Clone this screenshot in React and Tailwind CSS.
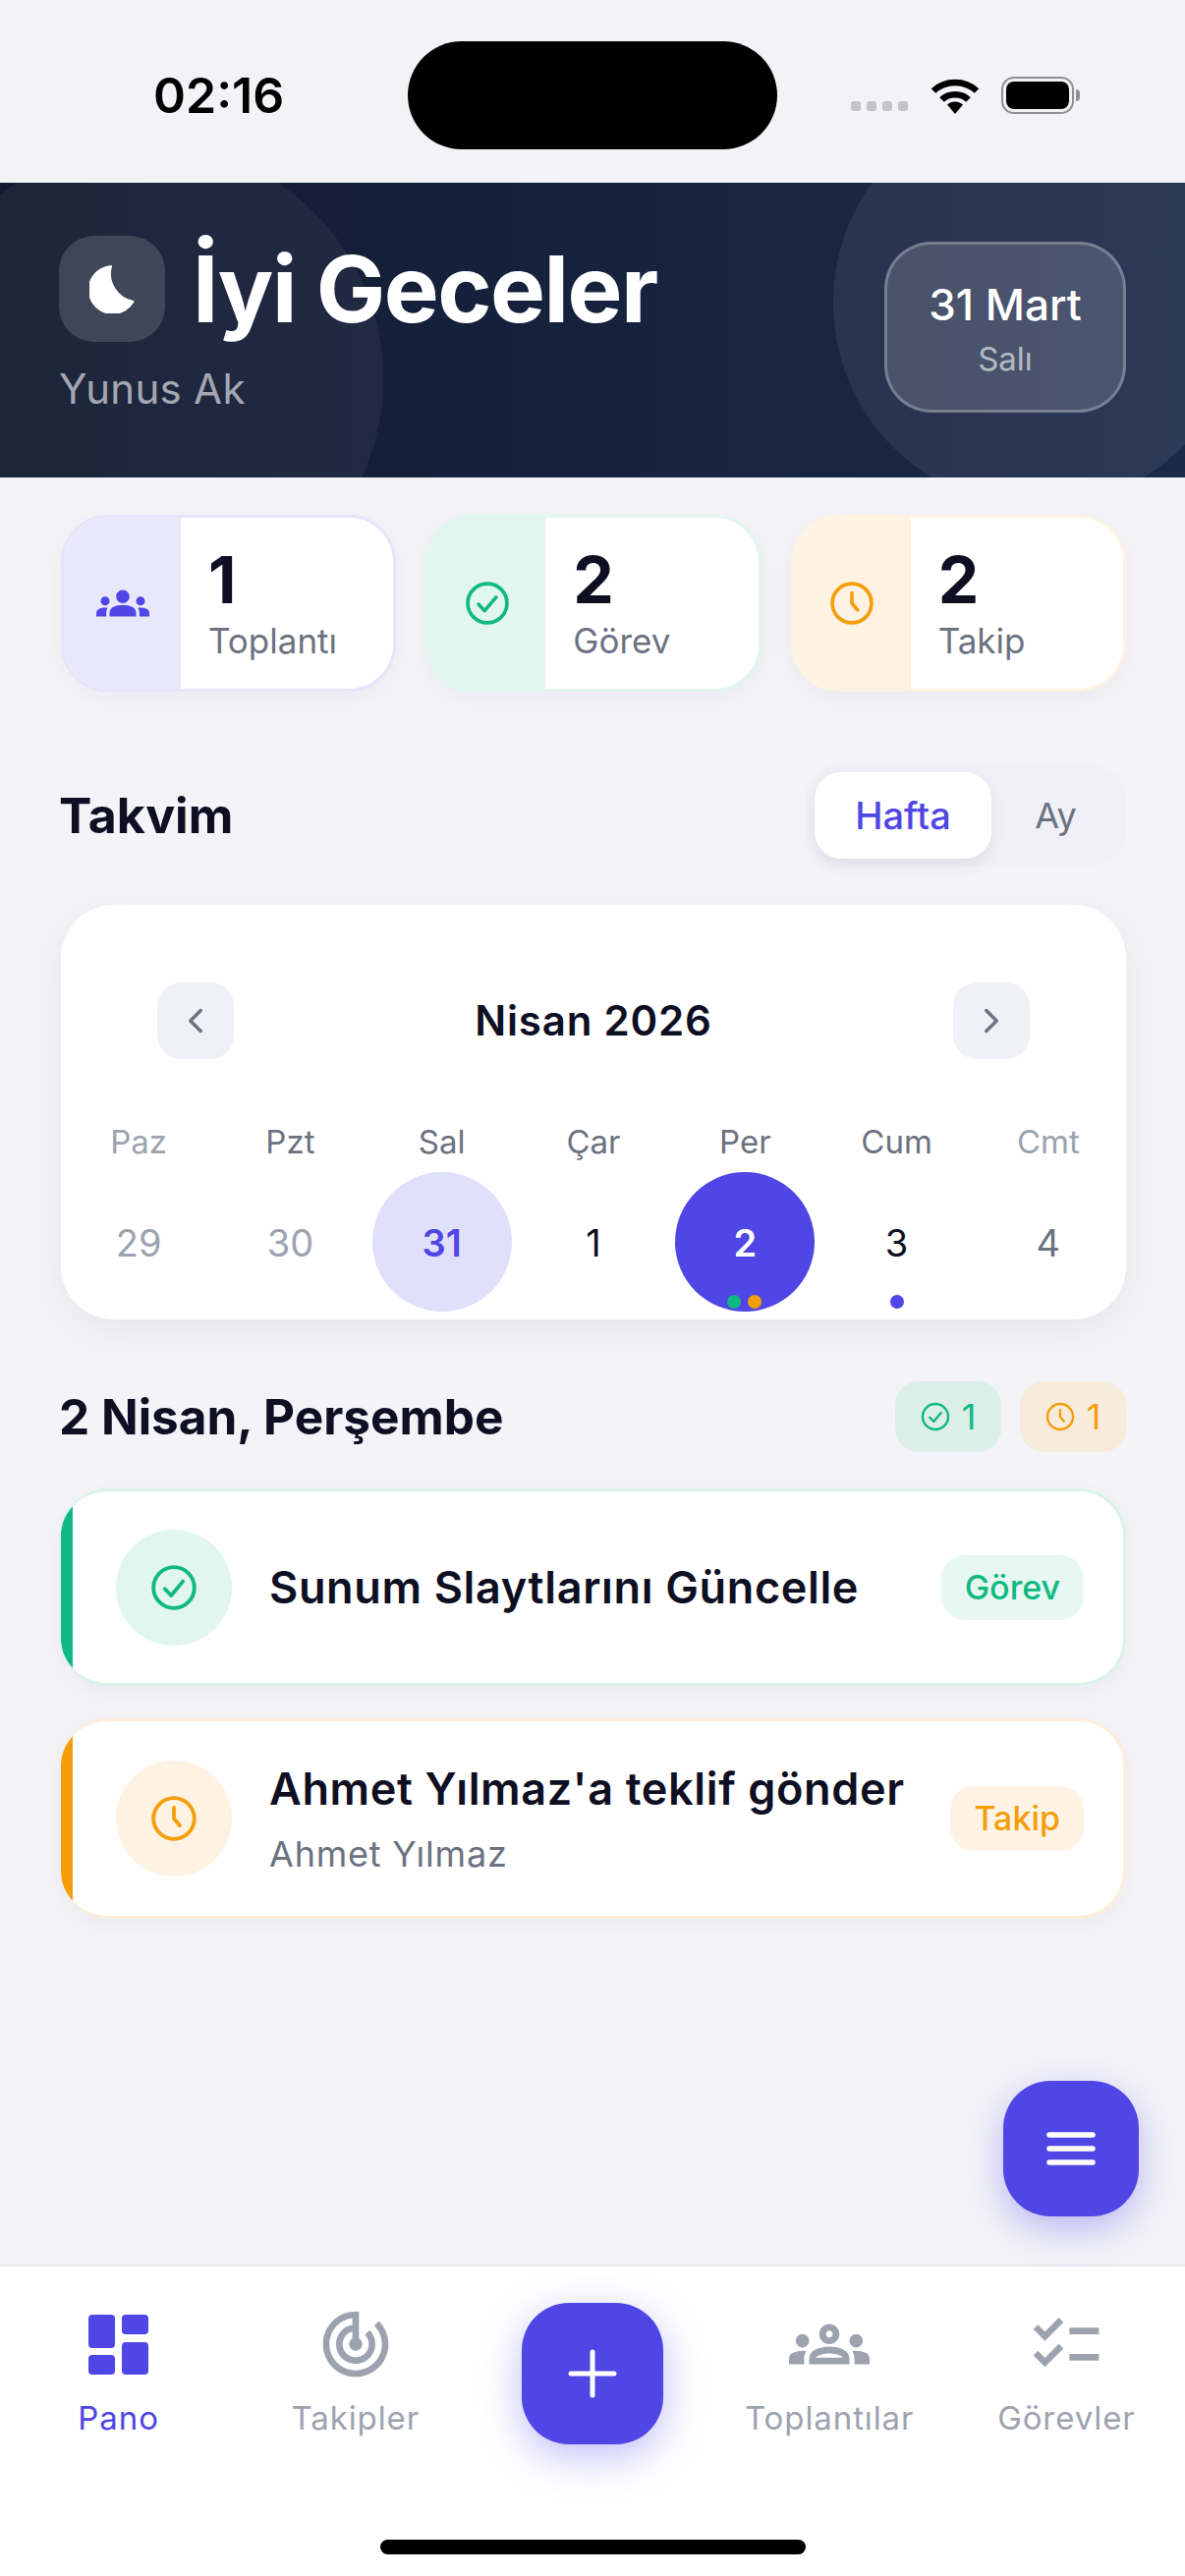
import { MdGroups, MdOutlineGroups, MdTrackChanges, MdChecklist } from "react-icons/md";
import { ChevronLeft, ChevronRight } from "lucide-react";

const weekdays = [
  { label: "Paz", muted: true },
  { label: "Pzt" },
  { label: "Sal" },
  { label: "Çar" },
  { label: "Per" },
  { label: "Cum" },
  { label: "Cmt", muted: true },
];

const CheckCircle = ({ size, className }) => (
  <svg width={size} height={size} viewBox="0 0 24 24" fill="none" stroke="currentColor" strokeWidth="1.9" strokeLinecap="round" strokeLinejoin="round" className={className}>
    <circle cx="12" cy="12" r="10.4" />
    <path d="M7.4 12.6l3.2 3.4 6-7.2" />
  </svg>
);

const ClockCircle = ({ size, className }) => (
  <svg width={size} height={size} viewBox="0 0 24 24" fill="none" stroke="currentColor" strokeWidth="1.9" strokeLinecap="round" strokeLinejoin="round" className={className}>
    <circle cx="12" cy="12" r="10.4" />
    <path d="M12 6.5V12l3 3.6" />
  </svg>
);

const MoonIcon = () => (
  <svg width="46" height="50" viewBox="0 0 46 50" fill="#ffffff" stroke="#ffffff" strokeWidth="2" strokeLinejoin="round">
    <path d="M22 2A24 24 0 1 0 44.5 38A29 29 0 0 1 22 2Z" />
  </svg>
);

const WifiIcon = () => (
  <svg width="50" height="39" viewBox="0 0 50 39" fill="none" stroke="#000000" strokeWidth="6.5" strokeLinecap="butt">
    <path d="M3 14.5C15 3 35 3 47 14.5" />
    <path d="M11.5 23.5C18.5 16.5 31.5 16.5 38.5 23.5" />
    <path d="M17 28.5C21.5 24.5 28.5 24.5 33 28.5L25 38Z" fill="#000000" stroke="none" />
  </svg>
);

const DashboardIcon = () => (
  <svg width="61" height="61" viewBox="0 0 61 61" fill="#4f46e5">
    <rect x="0" y="0" width="27" height="34" rx="4" />
    <rect x="0" y="41" width="27" height="20" rx="4" />
    <rect x="34" y="0" width="27" height="20" rx="4" />
    <rect x="34" y="28" width="27" height="33" rx="4" />
  </svg>
);

const StatCard = ({ icon, value, label, panel, border }) => (
  <div className={`flex h-[180px] overflow-hidden rounded-[48px] border-[3px] bg-white shadow-[0_6px_24px_rgba(17,17,39,0.04)] ${border}`}>
    <div className={`flex w-[119px] shrink-0 items-center justify-center ${panel}`}>{icon}</div>
    <div className="flex flex-col justify-center pb-[2px] pl-[28px]">
      <span className="text-[66px] leading-[78px] font-bold text-[#0f0f23]">{value}</span>
      <span className="text-[35px] leading-[46px] text-[#6b7280]">{label}</span>
    </div>
  </div>
);

const TaskCard = ({ icon, title, subtitle, tag, tagClass, circle, border, bar, height }) => (
  <div className={`flex items-center overflow-hidden rounded-[48px] border-[3px] border-l-0 bg-white pr-[40px] shadow-[0_6px_24px_rgba(17,17,39,0.04)] ${border} ${height}`}>
    <div className={`w-[12px] shrink-0 self-stretch ${bar}`} />
    <div className={`ml-[44px] flex h-[118px] w-[118px] shrink-0 items-center justify-center rounded-full ${circle}`}>{icon}</div>
    <div className="ml-[38px] min-w-0 flex-1">
      <div className="text-[45px] leading-[60px] font-semibold tracking-[0.65px] text-[#0f0f23]">{title}</div>
      {subtitle && <div className="mt-[12px] text-[36px] leading-[48px] tracking-[0.8px] text-[#6b7280]">{subtitle}</div>}
    </div>
    <span className={`rounded-[24px] px-[24px] py-[9px] text-[34px] leading-[48px] font-medium ${tagClass}`}>{tag}</span>
  </div>
);

const NavItem = ({ icon, label, active }) => (
  <div className="flex flex-col items-center">
    <div className="flex h-[80px] items-center justify-center">{icon}</div>
    <span className={`mt-[13px] text-[33px] leading-[44px] tracking-[0.9px] ${active ? "text-[#4f46e5]" : "text-[#9ca3af]"}`}>{label}</span>
  </div>
);

export default function App() {
  return (
    <div className="flex h-[2622px] w-[1206px] flex-col overflow-hidden bg-[#f3f3f8] [font-family:Inter,sans-serif]">
      {/* status bar */}
      <div className="flex h-[186px] shrink-0 items-start bg-[#f2f2f7] pt-[42px] pl-[156px]">
        <div className="flex h-[110px] w-[259px] items-center">
          <span className="text-[50px] leading-none font-semibold text-black">02:16</span>
        </div>
        <div className="h-[110px] w-[376px] rounded-[55px] bg-black" />
        <div className="ml-[75px] flex h-[110px] items-center">
          <div className="mt-[22px] flex gap-[6px]">
            <span className="h-[10px] w-[10px] rounded-[3px] bg-[#c4c4c8]" />
            <span className="h-[10px] w-[10px] rounded-[3px] bg-[#c4c4c8]" />
            <span className="h-[10px] w-[10px] rounded-[3px] bg-[#c4c4c8]" />
            <span className="h-[10px] w-[10px] rounded-[3px] bg-[#c4c4c8]" />
          </div>
          <div className="ml-[23px]">
            <WifiIcon />
          </div>
          <div className="ml-[22px] flex items-center">
            <div className="h-[38px] w-[74px] rounded-[13px] border-[2px] border-[#8e8e93] p-[3px]">
              <div className="h-full w-full rounded-[8px] bg-black" />
            </div>
            <div className="ml-[2px] h-[12px] w-[4px] rounded-r-[4px] bg-[#8e8e93]" />
          </div>
        </div>
      </div>

      {/* greeting header */}
      <div className="relative flex h-[300px] shrink-0 items-center justify-between overflow-hidden bg-gradient-to-r from-[#111a30] to-[#1c2a4a] pr-[60px] pl-[60px]">
        <div className="absolute top-[-40px] left-[-90px] h-[480px] w-[480px] rounded-full bg-white/5" />
        <div className="absolute top-[-86px] left-[848px] h-[416px] w-[416px] rounded-full bg-white/7" />
        <div className="relative mt-[-12px]">
          <div className="flex items-center gap-[28px]">
            <div className="flex h-[108px] w-[108px] items-center justify-center rounded-[36px] bg-white/15">
              <MoonIcon />
            </div>
            <h1 className="text-[94px] leading-[108px] font-bold tracking-[-1.5px] text-white">İyi Geceler</h1>
          </div>
          <div className="mt-[24px] text-[42px] leading-[48px] tracking-[0.3px] text-white/60">Yunus Ak</div>
        </div>
        <div className="relative mt-[-7px] flex h-[174px] w-[246px] flex-col items-center justify-center rounded-[48px] border-[3px] border-white/25 bg-white/15 pt-[3px]">
          <span className="text-[44px] leading-[54px] font-medium text-white">31 Mart</span>
          <span className="mt-[7px] text-[33px] leading-[42px] text-white/60">Salı</span>
        </div>
      </div>

      {/* page content */}
      <div className="relative flex-1 pr-[60px] pl-[62px]">
        <div className="mt-[38px] grid grid-cols-3 gap-[30px]">
          <StatCard
            icon={<MdGroups size={54} className="text-[#4f46e5]" />}
            value="1"
            label="Toplantı"
            panel="bg-[#e9e8fb]"
            border="border-[#e6e4fa]"
          />
          <StatCard
            icon={<CheckCircle size={46} className="text-[#10b981]" />}
            value="2"
            label="Görev"
            panel="bg-[#e1f6ee]"
            border="border-[#e1f6ee]"
          />
          <StatCard
            icon={<ClockCircle size={46} className="text-[#f59e0b]" />}
            value="2"
            label="Takip"
            panel="bg-[#fef2e2]"
            border="border-[#fef2e2]"
          />
        </div>

        <div className="mt-[74px] flex items-center justify-between">
          <h2 className="-ml-[2px] text-[50px] leading-[60px] font-bold text-[#0f0f23]">Takvim</h2>
          <div className="flex h-[104px] w-[326px] items-center rounded-[36px] bg-[#f0f0f6] py-[9px] pl-[9px]">
            <span className="flex h-[88px] w-[180px] items-center justify-center rounded-[27px] bg-white text-[38px] font-medium text-[#4f46e5] shadow-[0_6px_18px_rgba(17,17,39,0.08)]">Hafta</span>
            <span className="flex-1 pr-[6px] text-center text-[36px] text-[#6b7280]">Ay</span>
          </div>
        </div>

        <div className="mt-[39px] rounded-[54px] bg-white pt-[79px] pb-[8px] shadow-[0_12px_42px_rgba(17,17,39,0.06)]">
          <div className="flex items-center justify-between px-[98px]">
            <div className="flex h-[78px] w-[78px] items-center justify-center rounded-[24px] bg-[#f0f1f6]">
              <ChevronLeft size={42} strokeWidth={2} className="text-[#6b7280]" />
            </div>
            <span className="text-[42px] leading-[54px] font-semibold tracking-[0.8px] text-[#0f0f23]">Nisan 2026</span>
            <div className="flex h-[78px] w-[78px] items-center justify-center rounded-[24px] bg-[#f0f1f6]">
              <ChevronRight size={42} strokeWidth={2} className="text-[#6b7280]" />
            </div>
          </div>

          <div className="mt-[62px] grid grid-cols-7 px-[2px]">
            {weekdays.map((d) => (
              <span key={d.label} className={`text-center text-[33px] leading-[44px] ${d.muted ? "text-[#9ca3af]" : "text-[#6b7280]"}`}>
                {d.label}
              </span>
            ))}
          </div>

          <div className="mt-[9px] grid grid-cols-7 justify-items-center px-[2px] text-[38px]">
            <span className="flex h-[142px] w-[142px] items-center justify-center pt-[3px] text-[#9ca3af]">29</span>
            <span className="flex h-[142px] w-[142px] items-center justify-center pt-[3px] text-[#9ca3af]">30</span>
            <span className="flex h-[142px] w-[142px] items-center justify-center rounded-full bg-[#e0e0fa] pt-[3px] font-semibold text-[#4f46e5]">31</span>
            <span className="flex h-[142px] w-[142px] items-center justify-center pt-[3px] text-[#0f0f23]">1</span>
            <span className="relative flex h-[142px] w-[142px] items-center justify-center rounded-full bg-[#4f46e5] pt-[3px] font-semibold text-white">
              2
              <span className="absolute bottom-[3px] left-[53px] flex gap-[7px]">
                <span className="h-[14px] w-[14px] rounded-full bg-[#10b981]" />
                <span className="h-[14px] w-[14px] rounded-full bg-[#f59e0b]" />
              </span>
            </span>
            <span className="relative flex h-[142px] w-[142px] items-center justify-center pt-[3px] text-[#0f0f23]">
              3
              <span className="absolute bottom-[3px] left-[64px] h-[14px] w-[14px] rounded-full bg-[#4f46e5]" />
            </span>
            <span className="flex h-[142px] w-[142px] items-center justify-center pt-[3px] text-[#6b7280]">4</span>
          </div>
        </div>

        <div className="mt-[63px] flex items-center justify-between">
          <h2 className="-ml-[2px] text-[49.5px] leading-[60px] font-bold text-[#0f0f23]">2 Nisan, Perşembe</h2>
          <div className="flex gap-[19px]">
            <span className="flex h-[72px] w-[108px] items-center justify-center gap-[12px] rounded-[24px] bg-[#dcefe9] text-[36px] text-[#10b981]">
              <CheckCircle size={30} />1
            </span>
            <span className="flex h-[72px] w-[108px] items-center justify-center gap-[12px] rounded-[24px] bg-[#f7ebdb] text-[36px] text-[#f59e0b]">
              <ClockCircle size={30} />1
            </span>
          </div>
        </div>

        <div className="mt-[37px] flex flex-col gap-[33px]">
          <TaskCard
            icon={<CheckCircle size={48} className="text-[#10b981]" />}
            title="Sunum Slaytlarını Güncelle"
            tag="Görev"
            tagClass="bg-[#e7f8f2] text-[#10b981]"
            circle="bg-[#e1f6ee]"
            border="border-[#d9f3e9]"
            bar="bg-[#10b981]"
            height="h-[201px]"
          />
          <TaskCard
            icon={<ClockCircle size={48} className="text-[#f59e0b]" />}
            title="Ahmet Yılmaz'a teklif gönder"
            subtitle="Ahmet Yılmaz"
            tag="Takip"
            tagClass="bg-[#fef3e4] text-[#f59e0b]"
            circle="bg-[#fef2e2]"
            border="border-[#fdeeda]"
            bar="bg-[#f59e0b]"
            height="h-[204px]"
          />
        </div>

        {/* floating menu button */}
        <div className="absolute right-[47px] bottom-[48px] flex h-[138px] w-[138px] items-center justify-center rounded-[48px] bg-[#4f46e5] shadow-[0_12px_36px_rgba(79,70,229,0.35)]">
          <svg width="50" height="36" viewBox="0 0 50 36" stroke="#ffffff" strokeWidth="5.5" strokeLinecap="round">
            <path d="M3 4h44M3 18h44M3 32h44" />
          </svg>
        </div>
      </div>

      {/* bottom tab bar */}
      <div className="flex h-[318px] shrink-0 flex-col border-t-[3px] border-[#ebebf0] bg-white">
        <div className="grid grid-cols-5 items-start pt-[39px]">
          <NavItem icon={<DashboardIcon />} label="Pano" active />
          <NavItem icon={<MdTrackChanges size={80} className="text-[#9ca3af]" />} label="Takipler" />
          <div className="flex justify-center">
            <div className="mt-[-2px] flex h-[144px] w-[144px] items-center justify-center rounded-[48px] bg-[#4f46e5] shadow-[0_12px_42px_rgba(79,70,229,0.35)]">
              <svg width="50" height="50" viewBox="0 0 50 50" stroke="#ffffff" strokeWidth="5" strokeLinecap="round">
                <path d="M25 3v44M3 25h44" />
              </svg>
            </div>
          </div>
          <NavItem icon={<MdOutlineGroups size={82} className="text-[#9ca3af]" />} label="Toplantılar" />
          <NavItem icon={<MdChecklist size={80} className="text-[#9ca3af]" />} label="Görevler" />
        </div>
        <div className="mt-auto mb-[22px] h-[15px] w-[433px] self-center rounded-full bg-black" />
      </div>
    </div>
  );
}
